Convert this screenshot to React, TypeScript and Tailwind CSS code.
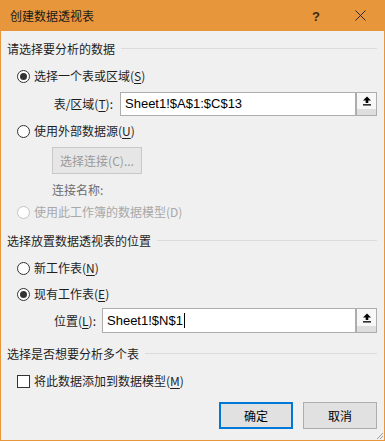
import React from "react";

const cjk = { fontFamily: '"Noto Sans CJK SC", "Noto Sans", sans-serif' };
const latin = { fontFamily: '"Liberation Sans", Arial, sans-serif' };

function Radio({ checked, disabled }: { checked?: boolean; disabled?: boolean }) {
  return (
    <div
      className={`w-[13px] h-[13px] rounded-full border flex items-center justify-center bg-white ${
        disabled ? "border-[#c4c4c4]" : "border-[#333333]"
      }`}
    >
      {checked && <div className="w-[7px] h-[7px] rounded-full bg-[#333333]" />}
    </div>
  );
}

function Header({ text }: { text: string }) {
  return (
    <div className="flex items-center h-[17px]">
      <span className="text-[12px] leading-[17px] text-[#1e1e1e] whitespace-nowrap">{text}</span>
      <div className="flex-1 h-px bg-[#dcdcdc] ml-[6px]" />
    </div>
  );
}

function UploadBtn() {
  return (
    <div className="w-[21px] h-full border border-[#adadad] bg-[#f0f0f0] flex flex-col">
      <div className="flex-1 flex items-center justify-center bg-[#f7f7f7]">
        <svg width="10" height="10" viewBox="0 0 10 10">
          <path d="M5 0.5 L9 4.5 L6.3 4.5 L6.3 7 L3.7 7 L3.7 4.5 L1 4.5 Z" fill="#000" />
          <rect x="1" y="8.2" width="8" height="1.3" fill="#000" />
        </svg>
      </div>
      <div className="h-[6px] bg-[#dedede]" />
    </div>
  );
}

function Mn({ c }: { c: string }) {
  return <span className="underline underline-offset-2">{c}</span>;
}

export default function App() {
  return (
    <div className="w-[385px] h-[441px] bg-[#e8963b] flex flex-col" style={cjk}>
      <div className="h-[31px] flex items-center pl-[10px] text-[12px] text-[#1a1a1a] relative">
        <span>创建数据透视表</span>
        <span className="absolute left-[312px] top-[7px] text-[13px] font-bold text-[#3a2a18]" style={latin}>
          ?
        </span>
        <svg className="absolute left-[355px] top-[10px]" width="11" height="11" viewBox="0 0 11 11">
          <path d="M0.5 0.5 L10.5 10.5 M10.5 0.5 L0.5 10.5" stroke="#2a2a2a" strokeWidth="1" />
        </svg>
      </div>
      <div className="flex-1 mx-px mb-px bg-[#f0f0f0] pl-[6px] pr-[7px] flex flex-col text-[12px] text-[#1e1e1e] relative">
        <div className="mt-[9px]">
          <Header text="请选择要分析的数据" />
        </div>
        <div className="mt-[9px] h-[20px] flex items-center pl-[10px]">
          <Radio checked />
          <span className="ml-[4px]">
            选择一个表或区域(<Mn c="S" />)
          </span>
        </div>
        <div className="mt-[6px] h-[24px] flex items-stretch">
          <div className="w-[106px] text-right flex items-center justify-end">
            表/区域(<Mn c="T" />):
          </div>
          <div className="ml-[7px] flex-1 flex border border-[#adadad] bg-white">
            <div className="flex-1 flex items-center pl-[4px] text-[13px] text-black" style={latin}>
              Sheet1!$A$1:$C$13
            </div>
          </div>
          <UploadBtn />
        </div>
        <div className="mt-[5px] h-[20px] flex items-center pl-[10px]">
          <Radio />
          <span className="ml-[4px]">
            使用外部数据源(<Mn c="U" />)
          </span>
        </div>
        <div className="mt-[6px] h-[27px] flex pl-[45px]">
          <div className="w-[90px] h-full border border-[#c8c8c8] bg-[#e6e6e6] flex items-center justify-center text-[#9a9a9a]">
            选择连接(C)...
          </div>
        </div>
        <div className="mt-[8px] h-[16px] flex items-center pl-[45px] text-[#6d6d6d]">连接名称:</div>
        <div className="mt-[4px] h-[20px] flex items-center pl-[10px] text-[#a8a8a8]">
          <Radio disabled />
          <span className="ml-[4px]">使用此工作簿的数据模型(D)</span>
        </div>
        <div className="mt-[10px]">
          <Header text="选择放置数据透视表的位置" />
        </div>
        <div className="mt-[9px] h-[20px] flex items-center pl-[10px]">
          <Radio />
          <span className="ml-[4px]">
            新工作表(<Mn c="N" />)
          </span>
        </div>
        <div className="mt-[6px] h-[20px] flex items-center pl-[10px]">
          <Radio checked />
          <span className="ml-[4px]">
            现有工作表(<Mn c="E" />)
          </span>
        </div>
        <div className="mt-[4px] h-[25px] flex items-stretch">
          <div className="w-[89px] text-right flex items-center justify-end">
            位置(<Mn c="L" />):
          </div>
          <div className="ml-[6px] flex-1 flex border border-[#adadad] bg-white">
            <div className="flex-1 flex items-center pl-[4px] text-[13px] text-black" style={latin}>
              Sheet1!$N$1
              <span className="inline-block w-px h-[15px] bg-black ml-px" />
            </div>
          </div>
          <UploadBtn />
        </div>
        <div className="mt-[12px]">
          <Header text="选择是否想要分析多个表" />
        </div>
        <div className="mt-[9px] h-[20px] flex items-center pl-[10px]">
          <div className="w-[13px] h-[13px] border border-[#333333] bg-white" />
          <span className="ml-[4px]">
            将此数据添加到数据模型(<Mn c="M" />)
          </span>
        </div>
        <div className="mt-[11px] flex justify-end gap-[10px]">
          <div className="w-[74px] h-[27px] border-2 border-[#0078d7] bg-[#e1e1e1] flex items-center justify-center text-black">
            确定
          </div>
          <div className="w-[74px] h-[27px] border border-[#adadad] bg-[#e1e1e1] flex items-center justify-center text-black">
            取消
          </div>
        </div>
        <svg className="absolute right-0 bottom-0" width="8" height="8" viewBox="0 0 8 8">
          <path d="M7 1 L1 7 M7 4 L4 7" stroke="#a0a0a0" strokeWidth="1" />
        </svg>
      </div>
    </div>
  );
}
